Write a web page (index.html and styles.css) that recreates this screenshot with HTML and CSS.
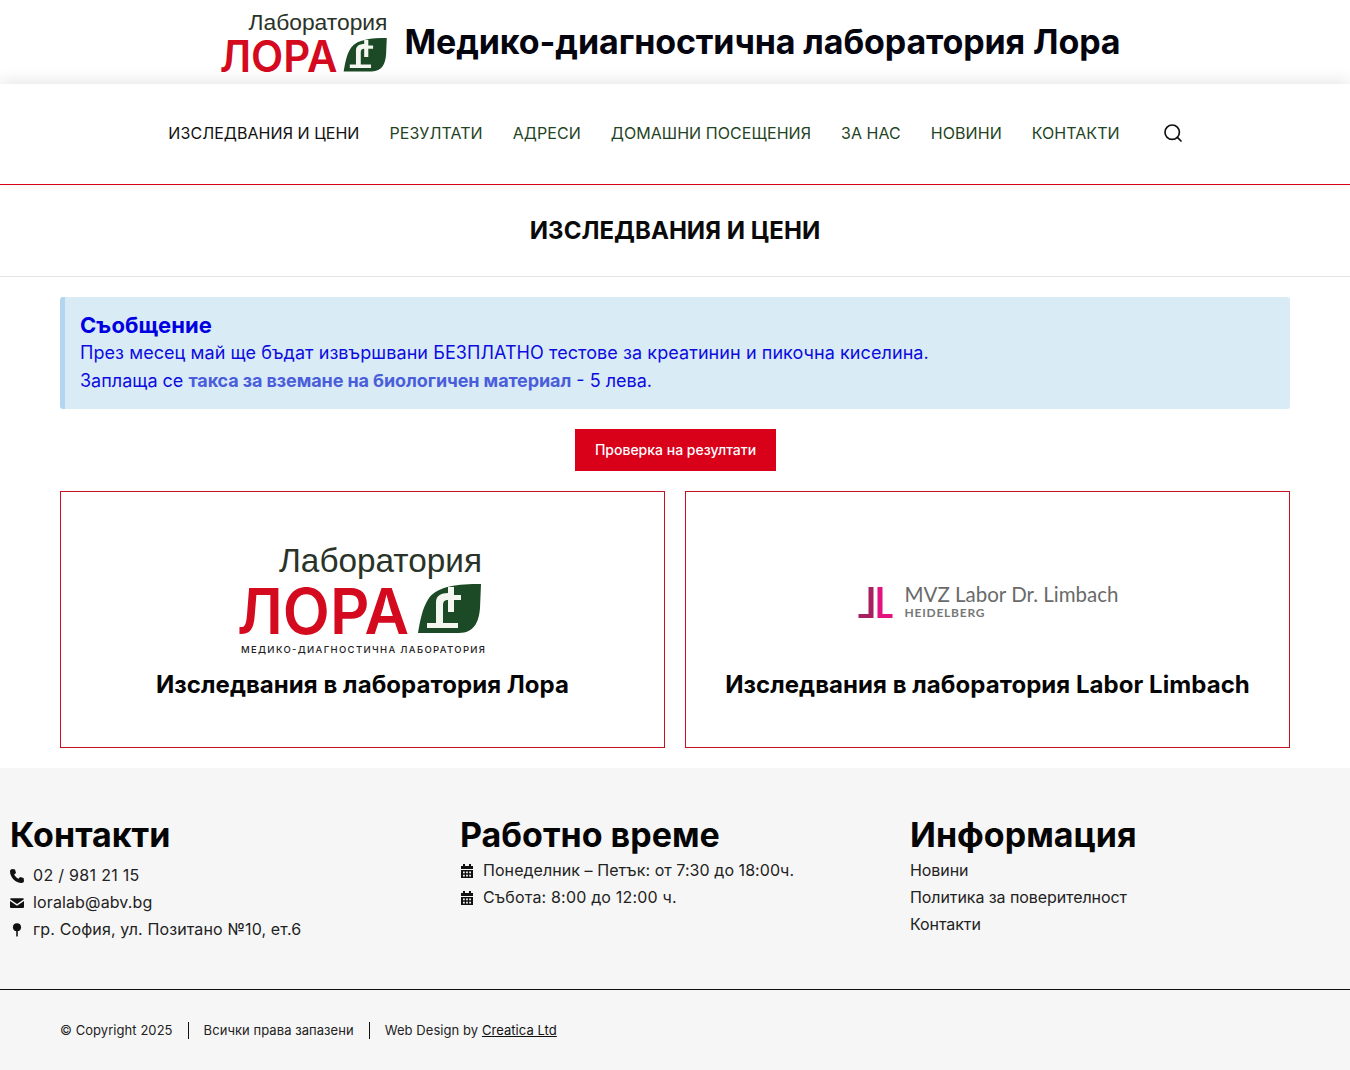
FILE: index.html
```html
<!DOCTYPE html>
<html lang="bg">
<head>
<meta charset="utf-8">
<title>Медико-диагностична лаборатория Лора</title>
<link rel="stylesheet" href="styles.css">
</head>
<body>
<header class="brand">
  <svg class="brand-logo" viewBox="0 -1 260 122" aria-label="Лаборатория Лора">
    <text class="logo-lab" x="46" y="42" textLength="203" lengthAdjust="spacingAndGlyphs">Лаборатория</text>
    <text class="logo-lora" x="4" y="104" textLength="172" lengthAdjust="spacingAndGlyphs">ЛОРА</text>
    <path class="leaf" d="M248 54 C225 54 205 56 196 68 C189 78 187 92 185 103 L226 103 C241 103 246 92 247 78 Z"/>
    <path class="leaf-mark" d="M194 93h31v5h-31z M203 72 C203 66 208 63 215 63v-6h6v8h7v5h-7v12h-6v-12 C211 70 210 72 210 76v17h-7z"/>
  </svg>
  <h1 class="brand-title">Медико-диагностична лаборатория Лора</h1>
</header>

<nav class="nav">
  <a class="nav-link is-active" href="#">Изследвания и цени</a>
  <a class="nav-link" href="#">Резултати</a>
  <a class="nav-link" href="#">Адреси</a>
  <a class="nav-link" href="#">Домашни посещения</a>
  <a class="nav-link" href="#">За нас</a>
  <a class="nav-link" href="#">Новини</a>
  <a class="nav-link" href="#">Контакти</a>
  <svg class="nav-search" viewBox="0 0 20 20" aria-label="Търсене">
    <circle cx="9.2" cy="9.2" r="7.2"/>
    <path d="M14.4 14.4 L18 18"/>
  </svg>
</nav>

<section class="page-title"><h2>Изследвания и цени</h2></section>

<main class="content">
  <div class="notice">
    <h3 class="notice-title">Съобщение</h3>
    <p class="notice-line">През месец май ще бъдат извършвани БЕЗПЛАТНО тестове за креатинин и пикочна киселина.</p>
    <p>Заплаща се <strong>такса за вземане на биологичен материал</strong> - 5 лева.</p>
  </div>
  <div class="cta"><a class="button" href="#">Проверка на резултати</a></div>
  <div class="cards">
    <a class="card" href="#">
      <svg class="card-logo" viewBox="0 0 260 135" aria-label="Лаборатория Лора">
        <text class="logo-lab" x="46" y="42" textLength="203" lengthAdjust="spacingAndGlyphs">Лаборатория</text>
        <text class="logo-lora" x="4" y="104" textLength="172" lengthAdjust="spacingAndGlyphs">ЛОРА</text>
        <path class="leaf" d="M248 54 C225 54 205 56 196 68 C189 78 187 92 185 103 L226 103 C241 103 246 92 247 78 Z"/>
        <path class="leaf-mark" d="M194 93h31v5h-31z M203 72 C203 66 208 63 215 63v-6h6v8h7v5h-7v12h-6v-12 C211 70 210 72 210 76v17h-7z"/>
        <text class="logo-tag" x="8" y="123" textLength="244">МЕДИКО-ДИАГНОСТИЧНА ЛАБОРАТОРИЯ</text>
      </svg>
      <h3 class="card-title">Изследвания в лаборатория Лора</h3>
    </a>
    <a class="card" href="#">
      <svg class="card-logo card-logo-wide" viewBox="0 0 300 135" aria-label="MVZ Labor Dr. Limbach Heidelberg">
        <path class="mvz-a" d="M30.500 57h5v31h-15v-4h10z"/>
        <path class="mvz-b" d="M39.500 57h5v27h10v4h-15z"/>
        <text class="mvz-name" x="66.500" y="72" textLength="214" lengthAdjust="spacingAndGlyphs">MVZ Labor Dr. Limbach</text>
        <text class="mvz-city" x="66.500" y="87" textLength="80">HEIDELBERG</text>
      </svg>
      <h3 class="card-title">Изследвания в лаборатория Labor Limbach</h3>
    </a>
  </div>
</main>

<footer class="footer">
  <div class="footer-cols">
    <div class="footer-col">
      <h2 class="footer-title">Контакти</h2>
      <ul class="footer-list footer-contacts">
        <li class="footer-phone">
          <svg class="fi" viewBox="1 1 14 14"><path d="M3.400 1 L6 1.600 L7 5 L5.200 6.500 C6 8.200 7.600 9.900 9.500 10.800 L11 9 L14.600 10 L15 12.700 C15 14 13.800 15 12.600 15 C6.600 14.800 1.200 9.400 1 3.400 C1 2.200 2 1.200 3.400 1 Z"/></svg>
          02 / 981 21 15
        </li>
        <li>
          <svg class="fi" viewBox="0 0 16 16"><path d="M1.500 2.500h13c.8 0 1.400.6 1.400 1.300L8 9 .1 3.800c0-.7.6-1.300 1.400-1.300z"/><path d="M0 5.600 8 11l8-5.400v6.800c0 .8-.6 1.400-1.400 1.400H1.400C.6 13.800 0 13.200 0 12.400z"/></svg>
          loralab@abv.bg
        </li>
        <li>
          <svg class="fi" viewBox="0 0 16 16"><circle cx="8" cy="4.800" r="4.600"/><rect x="7.100" y="8" width="1.800" height="7.500" rx=".7"/></svg>
          гр. София, ул. Позитано №10, ет.6
        </li>
      </ul>
    </div>
    <div class="footer-col">
      <h2 class="footer-title">Работно време</h2>
      <ul class="footer-list footer-hours">
        <li>
          <svg class="fi" viewBox="1 1 14 14"><path d="M4 1h2v2h4V1h2v2h2v3H2V3h2z"/><path fill-rule="evenodd" d="M2 7h12v8H2zM4 8.500v1.700h1.800V8.500zM7.100 8.500v1.700h1.800V8.500zM10.200 8.500v1.700H12V8.500zM4 11.700v1.800h1.800v-1.800zM7.100 11.700v1.800h1.800v-1.800zM10.200 11.700v1.800H12v-1.800z"/></svg>
          Понеделник – Петък: от 7:30 до 18:00ч.
        </li>
        <li class="footer-saturday">
          <svg class="fi" viewBox="1 1 14 14"><path d="M4 1h2v2h4V1h2v2h2v3H2V3h2z"/><path fill-rule="evenodd" d="M2 7h12v8H2zM4 8.500v1.700h1.800V8.500zM7.100 8.500v1.700h1.800V8.500zM10.200 8.500v1.700H12V8.500zM4 11.700v1.800h1.800v-1.800zM7.100 11.700v1.800h1.800v-1.800zM10.200 11.700v1.800H12v-1.800z"/></svg>
          Събота: 8:00 до 12:00 ч.
        </li>
      </ul>
    </div>
    <div class="footer-col">
      <h2 class="footer-title">Информация</h2>
      <ul class="footer-list footer-info">
        <li>Новини</li>
        <li>Политика за поверителност</li>
        <li>Контакти</li>
      </ul>
    </div>
  </div>
  <div class="footer-bottom">
    <span class="legal">© Copyright 2025</span>
    <span class="legal">Всички права запазени</span>
    <span class="legal">Web Design by <a href="#">Creatica Ltd</a></span>
  </div>
</footer>
</body>
</html>
```
FILE: styles.css
```css
* { box-sizing: border-box; }
html, body { margin: 0; padding: 0; }
body {
  font-family: Inter, "Liberation Sans", sans-serif;
  font-size: 16px;
  color: #111;
  background: #fff;
}
a { color: inherit; text-decoration: none; }
h1, h2, h3, p, ul { margin: 0; padding: 0; }
ul { list-style: none; }

.brand {
  height: 84px;
  padding-right: 13px;
  display: flex;
  align-items: center;
  justify-content: center;
  gap: 10px;
  background: #fff;
}
.brand-logo { width: 178px; height: 84px; flex: none; }
.brand-title { font-size: 34px; font-weight: 700; letter-spacing: -.11px; color: #05050f; line-height: 1.2; }

.logo-lab { font-family: "Liberation Sans", sans-serif; font-size: 33px; fill: #2a3328; }
.logo-lora { font-family: Inter, sans-serif; font-size: 63px; font-weight: 600; fill: #d40a1e; }
.logo-tag { font-family: Inter, sans-serif; font-size: 9.500px; font-weight: 500; fill: #222; }
.leaf { fill: #1c4a26; }
.leaf-mark { fill: #f4f6f0; }
.mvz-a { fill: #a8215f; }
.mvz-b { fill: #e2127f; }
.mvz-name { font-family: Lato, sans-serif; font-size: 21px; font-weight: 400; fill: #6a6a6a; }
.mvz-city { font-family: Lato, sans-serif; font-size: 12px; font-weight: 700; fill: #777; }

.nav {
  height: 101px;
  padding: 0 0 2px 1px;
  display: flex;
  align-items: center;
  justify-content: center;
  gap: 30px;
  background: #fff;
  border-bottom: 1px solid #d9001a;
  box-shadow: 0 -4px 14px rgba(0, 0, 0, .09);
  position: relative;
}
.nav-link { text-transform: uppercase; color: #1f4424; font-size: 16px; letter-spacing: .05px; }
.nav-link.is-active { color: #111; }
.nav-search { width: 20px; height: 20px; margin-left: 13px; fill: none; stroke: #111; stroke-width: 1.700; stroke-linecap: round; }

.page-title { height: 92px; display: flex; align-items: center; justify-content: center; border-bottom: 1px solid #e3e3e3; }
.page-title h2 { font-size: 24px; font-weight: 700; text-transform: uppercase; color: #0a0a0a; letter-spacing: .05px; }

.content { padding: 20px 60px; display: flex; flex-direction: column; gap: 20px; }
.notice {
  height: 112px;
  padding: 14px 15px 0;
  background: #d9ebf5;
  border-left: 5px solid #b3d6ee;
  border-radius: 3px;
  color: #0c0ce0;
  font-size: 18px;
  line-height: 28px;
}
.notice-title { font-size: 22px; font-weight: 700; color: #0000e0; line-height: 28px; letter-spacing: .1px; }
.notice-line { letter-spacing: .07px; }
.notice strong { font-weight: 700; color: #4a5edb; letter-spacing: -.1px; }
.cta { display: flex; justify-content: center; }
.button {
  display: block;
  width: 201px;
  height: 42px;
  margin-left: 1px;
  text-align: center;
  line-height: 42px;
  background: #d9001a;
  color: #fff;
  font-size: 14px;
  font-weight: 500;
}
.cards { display: grid; grid-template-columns: 1fr 1fr; gap: 20px; }
.card {
  height: 257px;
  padding-top: 38px;
  border: 1px solid #c8101e;
  display: flex;
  flex-direction: column;
  align-items: center;
}
.card-logo { width: 260px; height: 135px; flex: none; }
.card-logo-wide { width: 300px; }
.card-title { font-size: 24px; font-weight: 700; line-height: 30px; margin-top: 5px; color: #050505; letter-spacing: .05px; }

.footer { background: #f6f6f6; }
.footer-cols { height: 222px; padding-top: 45px; display: grid; grid-template-columns: repeat(3, 450px); border-bottom: 1px solid #111; }
.footer-col { padding: 0 10px; }
.footer-title { font-size: 34px; font-weight: 700; line-height: 44px; color: #050505; }
.footer-list { line-height: 27px; color: #222; }
.footer-contacts { margin-top: 5px; letter-spacing: .13px; }
.footer-hours { letter-spacing: .06px; }
.footer-info { letter-spacing: -.08px; }
.footer-list li { display: flex; align-items: center; }
.footer-list .footer-phone { letter-spacing: .3px; }
.footer-list .footer-saturday { letter-spacing: .18px; }
.fi { width: 14px; height: 14px; margin-right: 9px; fill: #111; flex: none; }

.footer-bottom { height: 80px; padding: 0 60px; display: flex; align-items: center; font-size: 13px; color: #222; letter-spacing: .06px; }
.legal { line-height: 17px; padding: 0 15px; border-left: 1px solid #111; }
.legal:first-child { padding-left: 0; border-left: 0; }
.legal a { text-decoration: underline; color: #111; }
```
